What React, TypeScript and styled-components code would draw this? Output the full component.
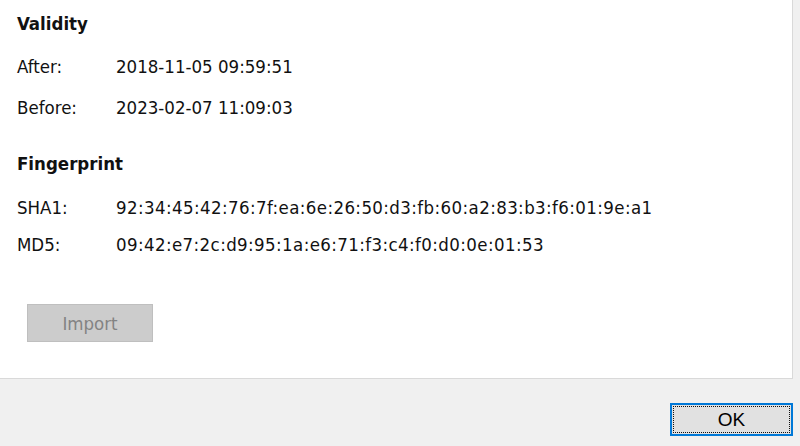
import React from "react";
import styled, { createGlobalStyle } from "styled-components";

const GlobalStyle = createGlobalStyle`
    html, body {
        margin: 0;
        padding: 0;
        background-color: #f0f0f0;
    }
    body {
        font-family: "DejaVu Sans Condensed", "DejaVu Sans", "Liberation Sans", sans-serif;
        font-size: 18.5px;
        color: #111;
    }
`

const Dialog = styled.div`
    width: 800px;
    height: 446px;
    display: flex;
    flex-direction: column;
    overflow: hidden;
`

const Panel = styled.div`
    width: 793px;
    height: 379px;
    box-sizing: border-box;
    background-color: #ffffff;
    border-right: 1px solid #d9d9d9;
    border-bottom: 1px solid #d9d9d9;
    padding: 12px 0 0 17px;
`

const Heading = styled.div<{ $top?: number }>`
    font-weight: bold;
    line-height: 24px;
    margin-top: ${p => p.$top ?? 0}px;
`

const Row = styled.div<{ $top: number }>`
    display: grid;
    grid-template-columns: 99px auto;
    line-height: 24px;
    margin-top: ${p => p.$top}px;
`

const Label = styled.span``

const Value = styled.span<{ $hex?: boolean }>`
    letter-spacing: ${p => (p.$hex ? "0.4px" : "0")};
`

const ImportButton = styled.button`
    margin: 47px 0 0 10px;
    width: 126px;
    height: 38px;
    background-color: #cccccc;
    border: 1px solid #bfbfbf;
    color: #838383;
    font-family: inherit;
    font-size: 18.5px;
    padding: 0;
    display: block;
`

const Footer = styled.div`
    display: flex;
    justify-content: flex-end;
    padding: 24px 7px 0 0;
`

const OkButton = styled.button`
    width: 123px;
    height: 33px;
    background-color: #e1e1e1;
    border: 2px solid #0078d7;
    outline: 1px dotted #111;
    outline-offset: -4px;
    color: #000;
    font-family: "Liberation Sans", Arial, sans-serif;
    font-size: 19px;
    padding: 0;
`

const App = () => {
    return (
        <>
            <GlobalStyle />
            <Dialog>
                <Panel>
                    <Heading>Validity</Heading>
                    <Row $top={19}>
                        <Label>After:</Label>
                        <Value>2018-11-05 09:59:51</Value>
                    </Row>
                    <Row $top={17}>
                        <Label>Before:</Label>
                        <Value>2023-02-07 11:09:03</Value>
                    </Row>
                    <Heading $top={32}>Fingerprint</Heading>
                    <Row $top={20}>
                        <Label>SHA1:</Label>
                        <Value $hex>92:34:45:42:76:7f:ea:6e:26:50:d3:fb:60:a2:83:b3:f6:01:9e:a1</Value>
                    </Row>
                    <Row $top={13}>
                        <Label>MD5:</Label>
                        <Value $hex>09:42:e7:2c:d9:95:1a:e6:71:f3:c4:f0:d0:0e:01:53</Value>
                    </Row>
                    <ImportButton disabled>Import</ImportButton>
                </Panel>
                <Footer>
                    <OkButton>OK</OkButton>
                </Footer>
            </Dialog>
        </>
    );
};

export default App;
